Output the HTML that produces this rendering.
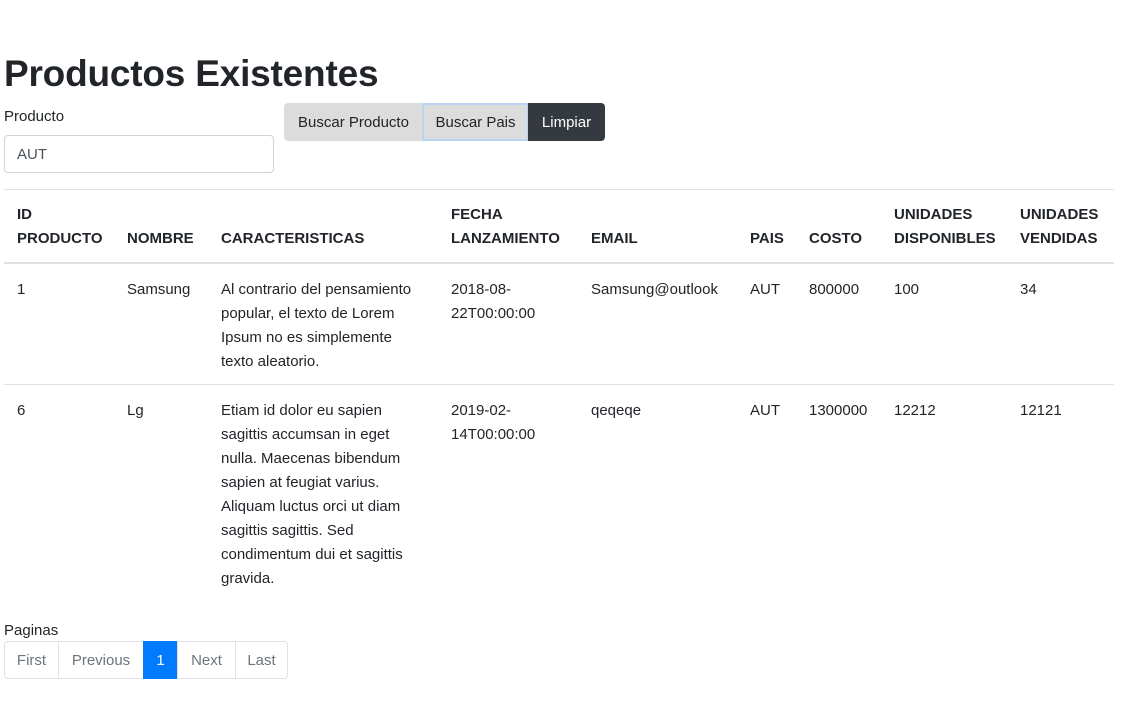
<!DOCTYPE html>
<html><head><meta charset="utf-8"><style>
body{margin:0;width:1139px;height:722px;background:#fff;font-family:"Liberation Sans",sans-serif;color:#212529;position:relative;overflow:hidden;font-size:15px;line-height:24px}
.a{position:absolute;white-space:nowrap}
h1{position:absolute;left:4px;top:50px;margin:0;font-size:37px;font-weight:bold;line-height:48px;letter-spacing:-0.2px}
.inp{position:absolute;left:4px;top:135px;width:270px;height:38px;border:1px solid #ced4da;border-radius:4px;box-sizing:border-box;padding:0 12px;line-height:38px;color:#495057}
.btn{position:absolute;top:103px;height:38px;line-height:40px;box-sizing:border-box;text-align:center}
.hr{position:absolute;left:4px;width:1110px;background:#dee2e6}
.th{font-weight:bold}
.pg{position:absolute;top:641px;height:38px;line-height:38px;border:1px solid #dee2e6;box-sizing:border-box;color:#6c757d;text-align:center}
</style></head><body>
<h1>Productos Existentes</h1>
<div class="a" style="left:4px;top:105px">Producto</div>
<div class="inp">AUT</div>
<div class="btn" style="left:284px;width:139px;background:#dcdcdc;border-radius:4px 0 0 4px">Buscar Producto</div>
<div class="btn" style="left:422px;width:107px;background:#dcdcdc;border:2px solid #b8d4f0;line-height:36px">Buscar Pais</div>
<div class="btn" style="left:528px;width:77px;background:#343a40;color:#fff;border-radius:0 4px 4px 0">Limpiar</div>
<div class="hr" style="top:189px;height:1px"></div>
<div class="hr" style="top:262px;height:2px"></div>
<div class="hr" style="top:384px;height:1px"></div>
<div class="a th" style="left:17px;top:203px">ID<br>PRODUCTO</div>
<div class="a th" style="left:127px;top:227px">NOMBRE</div>
<div class="a th" style="left:221px;top:227px">CARACTERISTICAS</div>
<div class="a th" style="left:451px;top:203px">FECHA<br>LANZAMIENTO</div>
<div class="a th" style="left:591px;top:227px">EMAIL</div>
<div class="a th" style="left:750px;top:227px">PAIS</div>
<div class="a th" style="left:809px;top:227px">COSTO</div>
<div class="a th" style="left:894px;top:203px">UNIDADES<br>DISPONIBLES</div>
<div class="a th" style="left:1020px;top:203px">UNIDADES<br>VENDIDAS</div>
<div class="a" style="left:17px;top:278px">1</div>
<div class="a" style="left:127px;top:278px">Samsung</div>
<div class="a" style="left:221px;top:278px">Al contrario del pensamiento<br>popular, el texto de Lorem<br>Ipsum no es simplemente<br>texto aleatorio.</div>
<div class="a" style="left:451px;top:278px">2018-08-<br>22T00:00:00</div>
<div class="a" style="left:591px;top:278px">Samsung@outlook</div>
<div class="a" style="left:750px;top:278px">AUT</div>
<div class="a" style="left:809px;top:278px">800000</div>
<div class="a" style="left:894px;top:278px">100</div>
<div class="a" style="left:1020px;top:278px">34</div>
<div class="a" style="left:17px;top:399px">6</div>
<div class="a" style="left:127px;top:399px">Lg</div>
<div class="a" style="left:221px;top:399px">Etiam id dolor eu sapien<br>sagittis accumsan in eget<br>nulla. Maecenas bibendum<br>sapien at feugiat varius.<br>Aliquam luctus orci ut diam<br>sagittis sagittis. Sed<br>condimentum dui et sagittis<br>gravida.</div>
<div class="a" style="left:451px;top:399px">2019-02-<br>14T00:00:00</div>
<div class="a" style="left:591px;top:399px">qeqeqe</div>
<div class="a" style="left:750px;top:399px">AUT</div>
<div class="a" style="left:809px;top:399px">1300000</div>
<div class="a" style="left:894px;top:399px">12212</div>
<div class="a" style="left:1020px;top:399px">12121</div>
<div class="a" style="left:4px;top:619px">Paginas</div>
<div class="pg" style="left:4px;width:55px;border-radius:4px 0 0 4px">First</div>
<div class="pg" style="left:58px;width:86px">Previous</div>
<div class="pg" style="left:143px;width:35px;background:#007bff;border-color:#007bff;color:#fff">1</div>
<div class="pg" style="left:177px;width:59px">Next</div>
<div class="pg" style="left:235px;width:53px;border-radius:0 4px 4px 0">Last</div>
</body></html>
